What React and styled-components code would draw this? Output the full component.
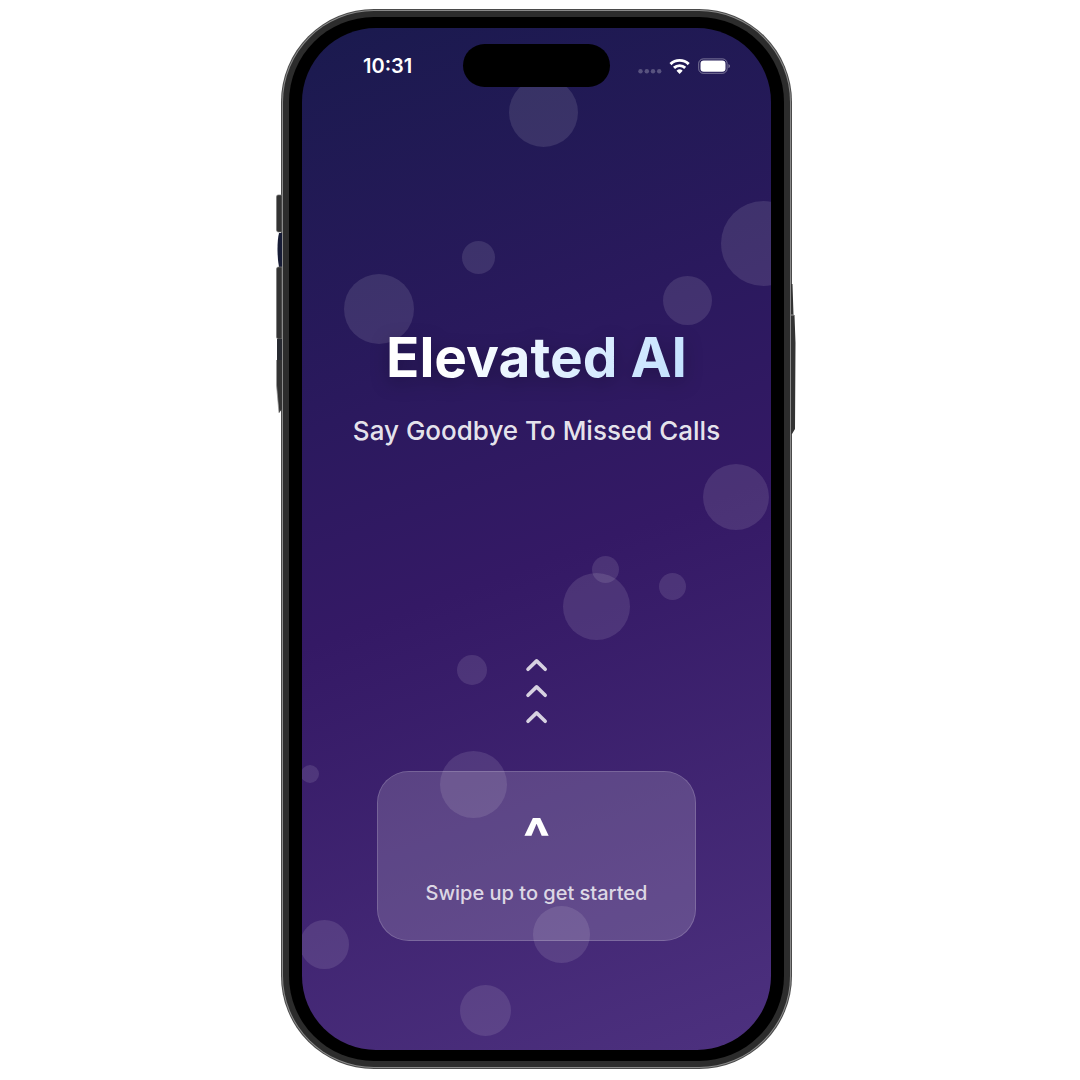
import React from "react";
import styled, { createGlobalStyle } from "styled-components";

const GlobalStyle = createGlobalStyle`
  *, *::before, *::after { box-sizing: border-box; }
  body {
    margin: 0;
    background: #fff;
    font-family: Inter, "Liberation Sans", sans-serif;
  }
  h1, p { margin: 0; }
`;

const Page = styled.main`
  display: flex;
  justify-content: center;
  min-height: 100vh;
  padding: 9px 7px 11px 0;
`;

const Phone = styled.div`
  position: relative;
  display: flex;
  width: 100%;
  max-width: 511px;
  padding: 1px;
  border-radius: 93px;
  background: #4a4a4a;
`;

const Rim = styled.div`
  display: flex;
  flex: 1;
  padding: 1px;
  border-radius: 92px;
  background: #8a8a8a;
`;

const Band = styled.div`
  display: flex;
  flex: 1;
  padding: 6px;
  border-radius: 91px;
  background: #2c2c2c;
`;

const Bezel = styled.div`
  display: flex;
  flex: 1;
  padding: 11px 13px;
  border-radius: 85px;
  background: #000;
`;

const SideKeys = styled.svg`
  position: absolute;
  top: 180px;
  ${(p) => (p.$side === "left" ? "left: -5px;" : "right: -4px;")}
`;

const Screen = styled.div`
  position: relative;
  isolation: isolate;
  display: flex;
  flex-direction: column;
  align-items: center;
  flex: 1;
  min-width: 0;
  padding: 16px 20px 109px;
  border-radius: 74px;
  overflow: hidden;
  color: #fff;
  background: linear-gradient(160deg, #1a1a4e 0%, #2b195e 34%, #341965 52%, #4d317f 100%);
`;

const Bubble = styled.span`
  position: absolute;
  z-index: -1;
  left: ${(p) => p.$x}px;
  top: ${(p) => p.$y}px;
  width: ${(p) => p.$size}px;
  height: ${(p) => p.$size}px;
  border-radius: 50%;
  background: rgba(255, 255, 255, 0.11);
`;

const StatusBar = styled.header`
  display: grid;
  grid-template-columns: 1fr 147px 1fr;
  align-items: center;
  width: 100%;
`;

const Time = styled.time`
  padding-left: 41px;
  font-size: 20px;
  line-height: 24px;
  font-weight: 600;
`;

const Island = styled.div`
  height: 43px;
  border-radius: 22px;
  background: #000;
`;

const Indicators = styled.svg`
  justify-self: end;
  margin-right: 21px;
`;

const Hero = styled.section`
  display: flex;
  flex: 1;
  flex-direction: column;
  align-items: center;
  justify-content: center;
  gap: 22px;
  padding-top: 28px;
  text-align: center;
`;

const Title = styled.h1`
  font-size: 55px;
  line-height: 72px;
  font-weight: 700;
  color: transparent;
  background: linear-gradient(125deg, #fff 25%, #e3f1ff 55%, #bfdfff 100%);
  background-clip: text;
  -webkit-background-clip: text;
  filter: drop-shadow(0 5px 9px rgba(0, 0, 0, 0.25));
`;

const Tagline = styled.p`
  font-size: 26px;
  line-height: 32px;
  font-weight: 500;
  color: rgba(255, 255, 255, 0.9);
`;

const Arrows = styled.div`
  display: flex;
  flex-direction: column;
`;

const SwipeCard = styled.button`
  display: flex;
  flex-direction: column;
  align-items: center;
  width: 100%;
  max-width: 319px;
  margin-top: 41px;
  padding: 38px 20px 33px;
  border: 1px solid rgba(255, 255, 255, 0.3);
  border-radius: 32px;
  background: rgba(255, 255, 255, 0.16);
  background-clip: padding-box;
  color: #fff;
  font-family: inherit;
  cursor: pointer;
`;

const Caret = styled.span`
  font-size: 56px;
  line-height: 56px;
  font-weight: 800;
`;

const Prompt = styled.span`
  margin-top: 13px;
  font-size: 20px;
  line-height: 28px;
  font-weight: 500;
  color: rgba(255, 255, 255, 0.8);
`;

const bubbles = [
  [207, 50, 69],
  [419, 173, 85],
  [160, 213, 33],
  [42, 246, 70],
  [361, 248, 49],
  [401, 436, 66],
  [290, 528, 27],
  [261, 545, 67],
  [357, 545, 27],
  [155, 627, 30],
  [138, 723, 67],
  [-1, 737, 18],
  [-2, 892, 49],
  [231, 878, 57],
  [158, 957, 51],
];

function Chevron() {
  return (
    <svg width="26" height="26" viewBox="0 0 26 26" aria-hidden="true">
      <path
        d="M4 17.300 12.600 8.900l8.600 8.400"
        fill="none"
        stroke="#fff"
        strokeOpacity="0.8"
        strokeWidth="3.600"
        strokeLinecap="round"
        strokeLinejoin="round"
      />
    </svg>
  );
}

function StatusIcons() {
  return (
    <Indicators width="93" height="20" viewBox="0 0 93 20" aria-label="No signal, Wi-Fi on, battery full">
      <g fill="#fff" fillOpacity="0.25">
        <circle cx="3.500" cy="15.200" r="2.200" />
        <circle cx="9.800" cy="15.200" r="2.200" />
        <circle cx="16" cy="15.200" r="2.200" />
        <circle cx="22.200" cy="15.200" r="2.200" />
      </g>
      <g fill="none" stroke="#fff" strokeWidth="2.900">
        <path d="M33.500 8.100a13 13 0 0 1 18.200 0" />
        <path d="M37 11.900a8 8 0 0 1 11.200 0" />
      </g>
      <path d="M39.500 14.800a4.500 4.500 0 0 1 6.200 0l-3.100 3.200z" fill="#fff" />
      <rect x="61.700" y="2.900" width="28.400" height="14.400" rx="4.600" fill="none" stroke="#fff" strokeOpacity="0.4" />
      <rect x="63.500" y="4.500" width="25" height="11.300" rx="3.200" fill="#fff" />
      <path d="M91.500 8v4.200c1.900-.9 1.900-3.300 0-4.200z" fill="#fff" fillOpacity="0.45" />
    </Indicators>
  );
}

function LeftKeys() {
  return (
    <SideKeys $side="left" width="6" height="230" viewBox="0 0 6 230" aria-hidden="true">
      <path d="M6 6H2Q.5 6 .5 8v33q0 2 2 2H6z" fill="#333" stroke="#777" strokeWidth="0.7" />
      <path d="M6 44H3q-1.500 6-1.500 16T3 78h3z" fill="#171c36" />
      <path d="M6 78H2.500Q.5 78 .5 80v68q0 2 2 2H6z" fill="#333" stroke="#777" strokeWidth="0.7" />
      <path d="M6 150H1v21h5z" fill="#282a31" />
      <path d="M6 171H.5v25L3 224l3-4z" fill="#333" />
      <path d="M.5 171v25L3 224" fill="none" stroke="#999" strokeWidth="0.7" />
    </SideKeys>
  );
}

function RightKey() {
  return (
    <SideKeys $side="right" width="5" height="250" viewBox="0 0 5 250" aria-hidden="true">
      <path d="M0 95h1.500l1 31H3.500l1 28-.5 86-3 5H0z" fill="#333" />
      <path d="M0 126h3" stroke="#999" strokeWidth="1" />
    </SideKeys>
  );
}

export default function App() {
  return (
    <>
      <GlobalStyle />
      <Page>
        <Phone>
          <LeftKeys />
          <RightKey />
          <Rim>
            <Band>
              <Bezel>
                <Screen>
                  {bubbles.map(([x, y, size]) => (
                    <Bubble key={`${x}-${y}`} $x={x} $y={y} $size={size} />
                  ))}
                  <StatusBar>
                    <Time>10:31</Time>
                    <Island />
                    <StatusIcons />
                  </StatusBar>
                  <Hero>
                    <Title>Elevated AI</Title>
                    <Tagline>Say Goodbye To Missed Calls</Tagline>
                  </Hero>
                  <Arrows>
                    <Chevron />
                    <Chevron />
                    <Chevron />
                  </Arrows>
                  <SwipeCard type="button">
                    <Caret aria-hidden="true">^</Caret>
                    <Prompt>Swipe up to get started</Prompt>
                  </SwipeCard>
                </Screen>
              </Bezel>
            </Band>
          </Rim>
        </Phone>
      </Page>
    </>
  );
}
